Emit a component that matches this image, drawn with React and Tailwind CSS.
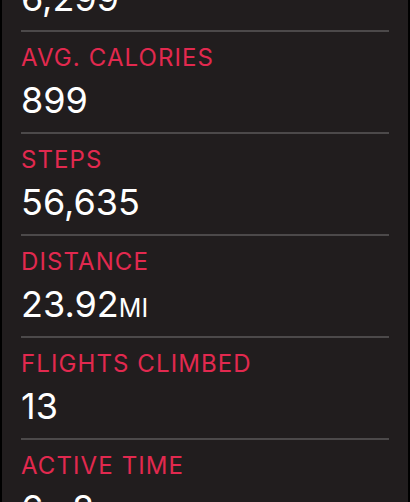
import React from "react";

const rows = [
  { label: "ACTIVE CALORIES", value: "6,299" },
  { label: "AVG. CALORIES", value: "899" },
  { label: "STEPS", value: "56,635" },
  { label: "DISTANCE", value: "23.92", unit: "MI" },
  { label: "FLIGHTS CLIMBED", value: "13" },
  { label: "ACTIVE TIME", parts: [["6", "H"], ["8", "M"]] },
];

const Row = ({ row, first }) => (
  <div className={`${first ? "" : "border-t-2 border-[#4c494a]"} pt-[12px] pb-[12px]`}>
    <div className="text-[24px] leading-[28px] tracking-[1.1px] text-[#e2294f]">{row.label}</div>
    <div className="mt-[8px] text-[36px] leading-[40px] text-white">
      {row.parts ? (
        row.parts.map(([n, u], i) => (
          <span key={i} className={i > 0 ? "ml-[10px]" : ""}>
            {n}
            <span className="text-[25px] leading-none">{u}</span>
          </span>
        ))
      ) : (
        <>
          {row.value}
          {row.unit && <span className="text-[25px] leading-none">{row.unit}</span>}
        </>
      )}
    </div>
  </div>
);

export default function App() {
  return (
    <div
      className="h-[502px] w-[410px] overflow-hidden border-x-2 border-black bg-[#211d1e] px-[19px]"
      style={{ fontFamily: "Inter, 'Noto Sans', sans-serif" }}
    >
      <div className="-mt-[70px]">
        {rows.map((row, i) => (
          <Row key={row.label} row={row} first={i === 0} />
        ))}
      </div>
    </div>
  );
}
